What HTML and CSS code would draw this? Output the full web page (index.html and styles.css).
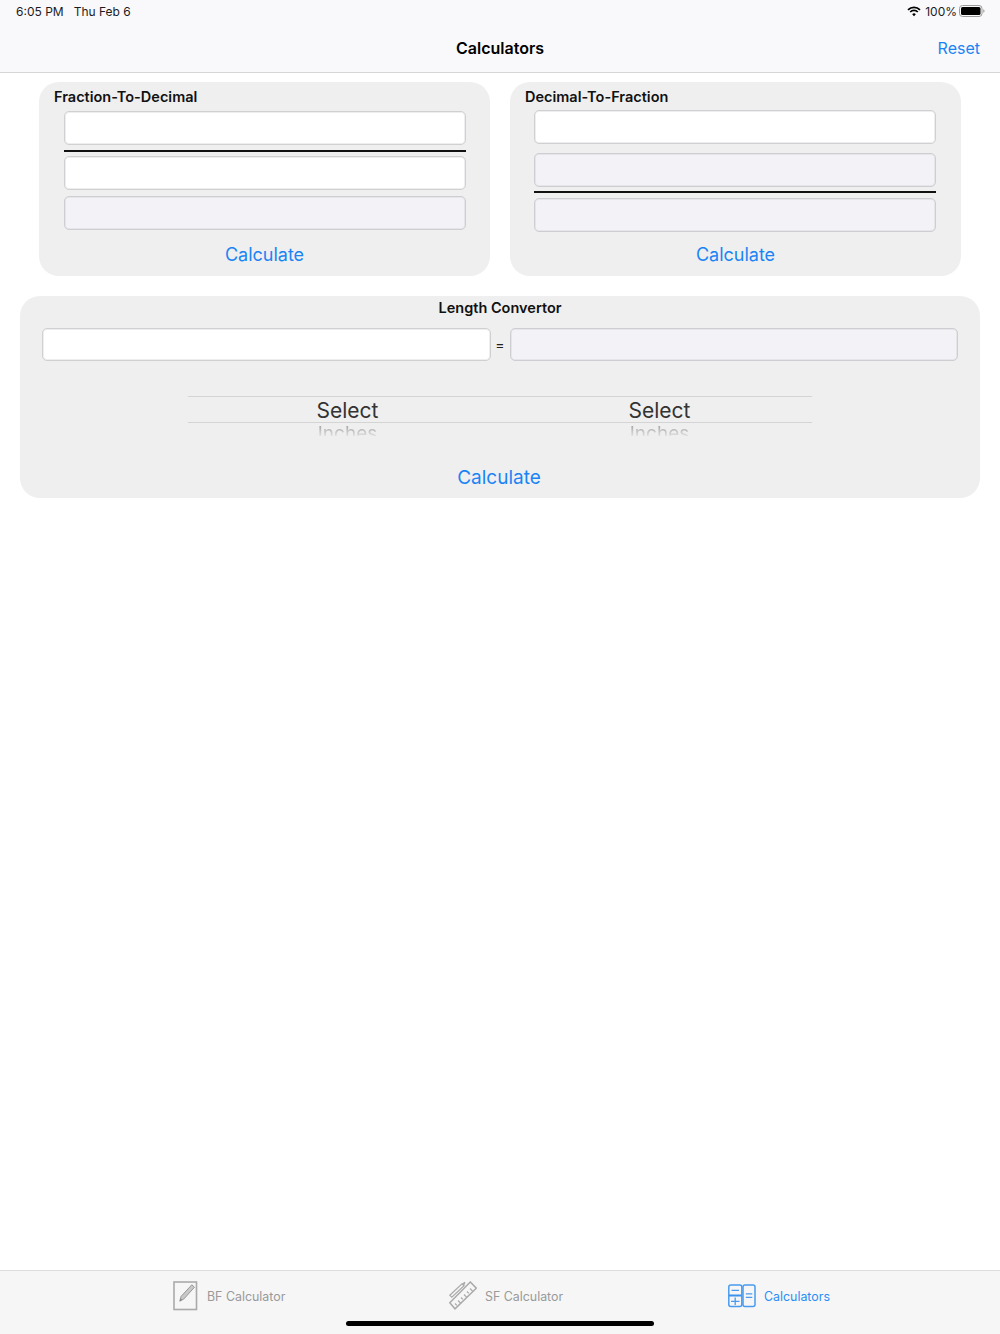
FILE: index.html
```html
<!DOCTYPE html>
<html lang="en">
<head>
    <meta charset="UTF-8">
    <title>Calculators</title>
    <link rel="stylesheet" href="styles.css">
</head>
<body>
    <header class="app-header">
        <div class="status-bar">
            <span class="status-time">6:05 PM</span>
            <span class="status-date">Thu Feb 6</span>
            <span class="status-right">
                <svg class="wifi-icon" width="14" height="11" viewBox="0 0 14 11">
                    <path d="M1 3.800a8.500 8.500 0 0 1 12 0" fill="none" stroke="#000" stroke-width="1.700"/>
                    <path d="M3.200 6a5.400 5.400 0 0 1 7.600 0" fill="none" stroke="#000" stroke-width="1.700"/>
                    <path d="M7 10.200 5.200 8.200a2.600 2.600 0 0 1 3.600 0z" fill="#000"/>
                </svg>
                <span class="battery-level">100%</span>
                <svg class="battery-icon" width="26" height="12" viewBox="0 0 26 12">
                    <rect x="0.500" y="0.500" width="22.500" height="11" rx="3" fill="none" stroke="#9a9a9a"/>
                    <rect x="2" y="2" width="19.500" height="8" rx="1.500" fill="#000"/>
                    <path d="M24.300 4.200c.8.300 1.200 1 1.200 1.800s-.4 1.500-1.200 1.800z" fill="#9a9a9a"/>
                </svg>
            </span>
        </div>
        <nav class="nav-bar">
            <span></span>
            <h1 class="nav-title">Calculators</h1>
            <a class="nav-action" href="#">Reset</a>
        </nav>
    </header>

    <main class="content">
        <div class="card-row">
            <section class="card card-fraction">
                <h2 class="card-title">Fraction-To-Decimal</h2>
                <div class="fields">
                    <input class="field" type="text">
                    <div class="divider"></div>
                    <input class="field" type="text">
                    <input class="field field-result" type="text" disabled>
                </div>
                <a class="calc-button" href="#">Calculate</a>
            </section>

            <section class="card card-decimal">
                <h2 class="card-title">Decimal-To-Fraction</h2>
                <div class="fields">
                    <input class="field" type="text">
                    <input class="field field-result" type="text" disabled>
                    <div class="divider"></div>
                    <input class="field field-result" type="text" disabled>
                </div>
                <a class="calc-button" href="#">Calculate</a>
            </section>
        </div>

        <section class="card card-length">
            <h2 class="card-title">Length Convertor</h2>
            <div class="length-row">
                <input class="field" type="text">
                <span class="equals">=</span>
                <input class="field field-result" type="text" disabled>
            </div>
            <div class="picker">
                <div class="picker-column">
                    <div class="picker-selected">Select</div>
                    <div class="picker-next"><span>Inches</span></div>
                </div>
                <div class="picker-column">
                    <div class="picker-selected">Select</div>
                    <div class="picker-next"><span>Inches</span></div>
                </div>
            </div>
            <a class="calc-button" href="#">Calculate</a>
        </section>
    </main>

    <footer class="tab-bar">
        <div class="tabs">
            <a class="tab tab-bf" href="#">
                <svg width="25" height="30" viewBox="0 0 25 30">
                    <rect x="1" y="1" width="22.500" height="27.500" fill="none" stroke="#aaa" stroke-width="1.600"/>
                    <path d="M6.800 20.200 8 15.500 18.800 3.800l2.700 2.400L10.800 18z" fill="#c8c8c8" stroke="#999" stroke-width="1"/>
                    <path d="M6.800 20.200 7.500 17.200 9.300 18.800z" fill="#888"/>
                </svg>
                <span>BF Calculator</span>
            </a>
            <a class="tab" href="#">
                <svg width="28" height="30" viewBox="0 0 28 30">
                    <path d="M.8 21.800 21.300 1l6 6.200L6 27.800z" fill="none" stroke="#aaa" stroke-width="1.500"/>
                    <path d="M6 22.500l1.800 1.800M9 19.500l2.800 2.800M12 16.500l1.800 1.800M15 13.500l2.800 2.800M18 10.500l1.800 1.800M21 7.500l2.800 2.800" fill="none" stroke="#aaa" stroke-width="1.200"/>
                    <path d="M.8 14.200 13 2.800l2 2L2.800 16.200z" fill="none" stroke="#aaa" stroke-width="1.200"/>
                    <path d="M13 2.800 15.500.8l1 1-1.500 3z" fill="#aaa"/>
                </svg>
                <span>SF Calculator</span>
            </a>
            <a class="tab tab-active" href="#">
                <svg width="28" height="24" viewBox="0 0 28 24">
                    <rect x="0.800" y="1" width="13" height="21.500" rx="2" fill="none" stroke="#4a9bf0" stroke-width="1.500"/>
                    <rect x="15" y="1" width="12" height="21.500" rx="2" fill="none" stroke="#4a9bf0" stroke-width="1.500"/>
                    <path d="M1 11.500h12.500" stroke="#3b93ef" stroke-width="2"/>
                    <path d="M3.500 6.300h7.500M3 17.300h8.500M7.200 13.600v7.400M17.800 9.800h6.500M17.800 13.400h6.500" stroke="#4a9bf0" stroke-width="1.300"/>
                </svg>
                <span>Calculators</span>
            </a>
        </div>
        <div class="home-indicator"></div>
    </footer>
</body>
</html>
```

FILE: styles.css
```css
* {
    margin: 0;
    padding: 0;
    box-sizing: border-box;
}

html, body {
    height: 100%;
}

body {
    display: flex;
    flex-direction: column;
    height: 1334px;
    background: #fff;
    color: #000;
    font-family: Inter, "Liberation Sans", sans-serif;
}

a {
    text-decoration: none;
}

/* Header */
.app-header {
    height: 73px;
    background: #f9f9fb;
    border-bottom: 1px solid #d6d6d9;
}

.status-bar {
    display: flex;
    align-items: center;
    height: 24px;
    padding: 0 15px 2px 16px;
    font-size: 12px;
    color: #1c1c1e;
}

.status-date {
    margin-left: 10px;
}

.status-right {
    display: flex;
    align-items: center;
    gap: 4px;
    margin-left: auto;
}

.battery-level {
    margin-right: -2px;
}

.nav-bar {
    display: grid;
    grid-template-columns: 1fr auto 1fr;
    align-items: center;
    height: 48px;
    padding: 0 20px;
}

.nav-title {
    font-size: 16px;
    font-weight: 600;
}

.nav-action {
    justify-self: end;
    font-size: 16px;
    color: #1a84f5;
}

/* Cards */
.content {
    flex: 1;
    padding: 9px 20px 0;
}

.card-row {
    display: flex;
    justify-content: center;
    gap: 20px;
    margin-bottom: 20px;
}

.card {
    background: #efefef;
    border-radius: 20px;
}

.card-fraction, .card-decimal {
    width: 451px;
    height: 194px;
    padding-top: 6px;
}

.card-title {
    padding-left: 15px;
    font-size: 14.500px;
    font-weight: 600;
    line-height: 18px;
    color: #111;
}

.fields {
    display: flex;
    flex-direction: column;
    margin: 5px 24px 0 25px;
}

.card-decimal .fields {
    margin: 4px 25px 0 24px;
}

.field {
    display: block;
    width: 100%;
    height: 34px;
    background: #fff;
    border: 1px solid #d0d0d3;
    border-radius: 5px;
    box-shadow: inset 0 0 0 1px #eeeef0; /* soft inner edge */
    outline: none;
}

.field-result {
    background: #f2f2f7;
    border-color: #cdcdd2;
    box-shadow: inset 0 0 0 1px #e6e6ea;
}

.divider {
    height: 2px;
    background: #111;
}

.card-fraction .divider {
    margin: 5px 0 4px;
}

.card-fraction .field-result {
    margin-top: 6px;
}

.card-decimal .field-result:nth-child(2) {
    margin-top: 9px;
}

.card-decimal .divider {
    margin: 4px 0 5px;
}

.calc-button {
    display: block;
    margin-top: 13px;
    font-size: 18px;
    line-height: 24px;
    text-align: center;
    color: #1a84f5;
}

.card-decimal .calc-button {
    margin-top: 11px;
}

/* Length convertor */
.card-length {
    height: 202px;
    padding-top: 3px;
}

.card-length .card-title {
    padding-left: 0;
    text-align: center;
}

.length-row {
    display: flex;
    align-items: center;
    margin: 11px 22px 0;
}

.length-row .field {
    flex: 1;
    width: auto;
    min-width: 0;
    height: 33px;
}

.equals {
    width: 19px;
    font-size: 14px;
    text-align: center;
    color: #222;
}

.picker {
    display: flex;
    width: 624px;
    margin: 35px auto 0;
}

.picker-column {
    flex: 1;
    text-align: center;
}

.picker-selected {
    height: 27px;
    padding-left: 7px;
    border-top: 1px solid #d4d4d4;
    border-bottom: 1px solid #d4d4d4;
    font-size: 21px;
    line-height: 27px;
    color: #333;
}

.picker-next {
    height: 13px;
    padding-left: 7px;
    overflow: hidden;
    font-size: 19px;
    line-height: 21px;
    color: #8e8e8e;
    -webkit-mask-image: linear-gradient(to bottom, rgba(0, 0, 0, 0.9), rgba(0, 0, 0, 0.15));
    mask-image: linear-gradient(to bottom, rgba(0, 0, 0, 0.9), rgba(0, 0, 0, 0.15));
}

.card-length .calc-button {
    margin-top: 30px;
    padding-right: 2px;
    font-size: 19px;
}

/* Tab bar */
.tab-bar {
    height: 64px;
    background: #f6f6f6;
    border-top: 1px solid #dedede;
}

.tabs {
    display: grid;
    grid-template-columns: 276px 279px 1fr;
    height: 50px;
    padding: 9px 0 0 173px;
}

.tab {
    display: flex;
    align-items: center;
    gap: 8px;
    height: 32px;
    font-size: 12.400px;
    color: #9a9a9a;
}

.tab-bf {
    gap: 9px;
}

.tab-active {
    color: #2b8ef5;
}

.home-indicator {
    width: 308px;
    height: 5px;
    margin: 0 auto;
    background: #000;
    border-radius: 3px;
}
```
